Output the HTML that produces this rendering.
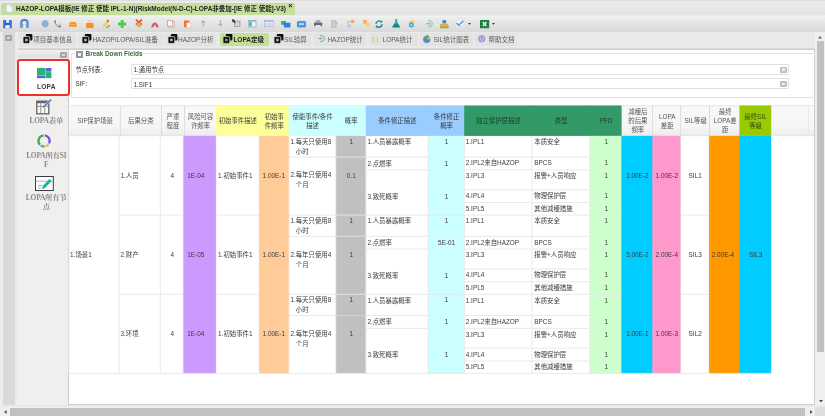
<!DOCTYPE html>
<html lang="zh"><head><meta charset="utf-8"><title>HAZOP-LOPA</title><style>
html,body{margin:0;padding:0}
body{width:825px;height:416px;overflow:hidden;position:relative;background:#e4e4e4;font-family:"Liberation Sans","Noto Sans CJK SC",sans-serif;font-size:6.6px;color:#333;line-height:1.2}
.a{position:absolute;box-sizing:border-box}
.t{position:absolute;white-space:nowrap}
#root{position:absolute;left:0;top:0;width:825px;height:416px;will-change:transform;transform:translateZ(0);filter:blur(.45px)}
.c{position:absolute;box-sizing:border-box;display:flex;white-space:nowrap;font-size:6.4px;color:#3a3a3a}
.hc{position:absolute;box-sizing:border-box;display:flex;align-items:center;justify-content:center;text-align:center;color:#555;font-size:6.4px;line-height:8.7px;padding-top:1.7px}
svg{position:absolute;overflow:visible}
</style></head><body><div id="root">
<div class="a" style="left:0;top:0;width:825px;height:15.6px;background:linear-gradient(#dcdcdc 0,#ebebeb 1.6px,#e3e3e3 100%)"></div>
<div class="a" style="left:1.4px;top:2.6px;width:293.2px;height:12.4px;background:#c6de9b;border-radius:2px 2px 0 0"></div>
<div class="a" style="left:0;top:15.4px;width:825px;height:1.8px;background:linear-gradient(#e6eddb,#f4f5f1)"></div>
<svg style="left:5.5px;top:4px" width="7" height="8.5" viewBox="0 0 7 8.5"><path d="M0.3 0.3h4l2.4 2.4v5.5h-6.4z" fill="#f4f7fb" stroke="#b9c4d6" stroke-width=".6"/><path d="M4.3 .3v2.4h2.4" fill="#dfe6f2" stroke="#b9c4d6" stroke-width=".5"/></svg>
<div class="t" id="title" style="left:16px;top:5.1px;font-weight:bold;font-size:6.48px;color:#222">HAZOP-LOPA模板(IE 修正 使能 IPL-1-N)(RiskModel(N-D-C)-LOPA非叠加-[IE 修正 使能]-V3)</div>
<div class="t" style="left:288.2px;top:2.2px;font-weight:bold;font-size:7.4px;color:#222">×</div>
<div class="a" style="left:0;top:17.2px;width:825px;height:14.6px;background:linear-gradient(#eeeeee,#d8d8d8)"></div>
<div class="a" id="toolbar" style="left:0;top:0;width:0;height:0"><svg style="left:3.3px;top:19.6px" width="8.8" height="8.2" viewBox="0 0 8.8 8.2"><rect x="0" y="0" width="8.8" height="8.2" rx=".9" fill="#2c5fcf"/><rect x="0" y="0" width="1.4" height="8.2" fill="#4f86e6"/><rect x="7.4" y="0" width="1.4" height="8.2" fill="#4f86e6"/><rect x="3" y="0" width="3.2" height="2.8" fill="#dfe9fa"/><rect x="2.4" y="5.2" width="4.2" height="3" fill="#f4f7fd"/></svg>
<svg style="left:20px;top:19.200000000000003px" width="8.8" height="8.8" viewBox="0 0 8.8 8.8"><path d="M0 8.8V3.6A4.4 3.6 0 0 1 8.8 3.6V8.8z" fill="#5a9be0"/><path d="M1.2 4.2A3.2 3 0 0 1 7.6 4.2V2.8A3.2 2.6 0 0 0 1.2 2.8z" fill="#2f6dc4"/><circle cx="4.4" cy="4" r="1.9" fill="#fde7d6"/><rect x="2.4" y="5.8" width="4" height="3" fill="#f7a868"/><rect x="3.5" y="5.8" width="1.8" height="3" fill="#fff"/></svg>
<svg style="left:40.6px;top:19.6px" width="8.4" height="7.6" viewBox="0 0 8.4 7.6"><circle cx="4.2" cy="3.8" r="3.8" fill="#a9c4e3"/><circle cx="4.2" cy="3.8" r="2.4" fill="none" stroke="#6b98cf" stroke-width=".9"/><circle cx="4.2" cy="3.8" r=".9" fill="#6b98cf"/></svg>
<svg style="left:53.6px;top:19.8px" width="7.4" height="7.8" viewBox="0 0 7.4 7.8"><path d="M1 1.2c.2 3 1.6 4.8 4.6 5.6" fill="none" stroke="#7a7a7a" stroke-width="1"/><circle cx="1.1" cy="1.2" r=".9" fill="#7a7a7a"/><circle cx="5.9" cy="6.6" r="1.1" fill="#7a7a7a"/><path d="M4.6 4.2h2.4" stroke="#9a9a9a" stroke-width=".7"/></svg>
<svg style="left:69px;top:22.400000000000002px" width="7.8" height="4.8" viewBox="0 0 7.8 4.8"><path d="M0 1.8L1.6 0h4.6L7.8 1.8V4.8H0z" fill="#f7941d"/><rect x="0" y="2" width="7.8" height=".8" fill="#fdbb62"/></svg>
<svg style="left:86px;top:19.8px" width="7.6" height="8" viewBox="0 0 7.6 8"><path d="M2 3.4V2.4a1.8 1.8 0 0 1 3.6 0V3.4" fill="none" stroke="#fac27e" stroke-width="1"/><rect x="0" y="3" width="7.6" height="5" rx=".8" fill="#f7941d"/></svg>
<svg style="left:101.6px;top:18.6px" width="8.6" height="9.2" viewBox="0 0 8.6 9.2"><path d="M.6 8.4L1.4 5.6 5.2 1.4 7 3 3.2 7.4z" fill="#f3d04a"/><path d="M4.2 1.8L5.6.4 7.4 2 6.2 3.4z" fill="#e2604c"/><path d="M3.4 8.8L7 5.2 8.4 6.6 5.6 9.2z" fill="#79c96a"/></svg>
<svg style="left:118px;top:19.8px" width="8.2" height="8" viewBox="0 0 8.2 8"><path d="M2.7 0h2.8v2.6h2.7v2.8H5.5V8H2.7V5.4H0V2.6h2.7z" fill="#4fcb4b"/></svg>
<svg style="left:135.4px;top:19.200000000000003px" width="7.8" height="8.6" viewBox="0 0 7.8 8.6"><path d="M.8.6l6.2 5M7 .6L.8 5.6" stroke="#e6452f" stroke-width="1.5"/><circle cx="3.9" cy="5.8" r="2.3" fill="#f5a742"/><path d="M1.8 7A2.4 2.4 0 0 0 6 7z" fill="#9ccf5a"/></svg>
<svg style="left:150.8px;top:22.0px" width="7.8" height="5.8" viewBox="0 0 7.8 5.8"><path d="M.2 5.6C.6 2 2.4.4 3.9.4S7.2 2 7.6 5.6L5.4 5.2 3.9 2.6 2.4 5.2z" fill="#d55c6c"/></svg>
<svg style="left:167.4px;top:19.6px" width="7.6" height="7.6" viewBox="0 0 7.6 7.6"><rect x="1.8" y="1.6" width="5.4" height="5.6" fill="#fbf3ef" stroke="#d3a79b" stroke-width=".8"/><rect x=".4" y=".4" width="5.2" height="5.6" fill="#fff" stroke="#c99b8f" stroke-width=".8"/></svg>
<svg style="left:184.4px;top:20.0px" width="7.2" height="7.8" viewBox="0 0 7.2 7.8"><rect x="0" y=".4" width="5.4" height="6.8" rx=".6" fill="#ee7a30"/><rect x="2.8" y="2.8" width="4.2" height="4.8" fill="#fff" stroke="#f1b089" stroke-width=".6"/></svg>
<svg style="left:201.2px;top:20.0px" width="4.6" height="6.6" viewBox="0 0 4.6 6.6"><path d="M2.3 6.6V1M.4 2.8L2.3.7 4.2 2.8" fill="none" stroke="#9c9c9c" stroke-width=".9"/></svg>
<svg style="left:217.6px;top:20.0px" width="4.6" height="6.6" viewBox="0 0 4.6 6.6"><path d="M2.3 0V5.6M.4 3.8L2.3 5.9 4.2 3.8" fill="none" stroke="#9c9c9c" stroke-width=".9"/></svg>
<svg style="left:232.4px;top:19.0px" width="8.4" height="8" viewBox="0 0 8.4 8"><rect x="2.6" y="2.2" width="5.4" height="5.4" fill="#d4d4d4" stroke="#9a9a9a" stroke-width=".8"/><path d="M0 0l3.4 1.4-1.2.7 1.5 1.7-.8.7L1.5 2.8.8 3.8z" fill="#222"/></svg>
<svg style="left:248px;top:19.6px" width="8.4" height="7.4" viewBox="0 0 8.4 7.4"><rect x=".4" y=".4" width="7.6" height="6.6" fill="#f4f9fd" stroke="#86aeda" stroke-width=".8"/><rect x="1.2" y="2" width="2.8" height="4.4" fill="#68c271"/><rect x=".4" y=".4" width="7.6" height="1.3" fill="#86aeda"/></svg>
<svg style="left:264px;top:20.400000000000002px" width="9.8" height="6.6" viewBox="0 0 9.8 6.6"><rect x=".4" y=".4" width="9" height="5.8" fill="#e4ebf6" stroke="#a3b8d8" stroke-width=".8"/><rect x=".4" y=".4" width="9" height="1.6" fill="#aebfdc"/><rect x="2" y="3" width="5.8" height="2" fill="#cbd7ea"/></svg>
<svg style="left:280.6px;top:20.8px" width="9.4" height="6.4" viewBox="0 0 9.4 6.4"><rect x="0" y="0" width="5" height="3.8" rx=".6" fill="#35b08c"/><path d="M2.4 1.8h7v4.6H3z" fill="#2f7fe0"/></svg>
<svg style="left:297px;top:21.0px" width="9" height="6.4" viewBox="0 0 9 6.4"><rect x=".4" y=".4" width="8.2" height="5.6" rx=".8" fill="#4f9be6" stroke="#3a84d2" stroke-width=".8"/><rect x="2" y="2.2" width="5" height="1.8" fill="#b9d8f6"/></svg>
<svg style="left:314px;top:20.200000000000003px" width="8.2" height="7.6" viewBox="0 0 8.2 7.6"><rect x="1.8" y="0" width="4.6" height="2.8" fill="#a7adb8"/><rect x="0" y="2.6" width="8.2" height="3.6" rx=".6" fill="#626b79"/><rect x="1.6" y="5" width="5" height="2.6" fill="#dfe3ea"/></svg>
<svg style="left:330.6px;top:20.0px" width="7" height="8" viewBox="0 0 7 8"><rect x=".4" y=".4" width="4.6" height="7.2" fill="#c9cfd6" stroke="#aeb6bf" stroke-width=".6"/><path d="M4 3.2h2.8M5.4 1.8v2.8" stroke="#aab2bb" stroke-width=".8"/></svg>
<svg style="left:346.6px;top:20.0px" width="7.6" height="7.8" viewBox="0 0 7.6 7.8"><rect x="0" y=".6" width="3.2" height="3" fill="#f4cf72"/><rect x="4" y="0" width="3.2" height="3" fill="#efa184"/><rect x=".6" y="4.4" width="3" height="3" fill="#a3cbea"/><rect x="4.2" y="4" width="3.2" height="3.4" fill="#dedede"/></svg>
<svg style="left:363.4px;top:20.0px" width="6.6" height="6.8" viewBox="0 0 6.6 6.8"><rect x="0" y="0" width="4" height="3.8" fill="#f5b25c"/><rect x="2.4" y="2.6" width="4.2" height="4.2" fill="#f5d572"/></svg>
<svg style="left:375.4px;top:19.8px" width="8" height="8" viewBox="0 0 8 8"><path d="M1 4A3 3 0 0 1 6.4 2.2" fill="none" stroke="#1fa79a" stroke-width="1.6"/><path d="M7 4.2A3 3 0 0 1 1.6 6" fill="none" stroke="#1f8fb0" stroke-width="1.6"/><path d="M5.2.4l2.4.6-.8 2.4z" fill="#1fa79a"/><path d="M2.8 8L.4 7.2l1-2.2z" fill="#1f8fb0"/></svg>
<svg style="left:391.6px;top:19.400000000000002px" width="8.4" height="8.8" viewBox="0 0 8.4 8.8"><path d="M3.2 0h2v2.8l3 5.2a.6.6 0 0 1-.5.8H.7a.6.6 0 0 1-.5-.8L3.2 2.8z" fill="#2bada4"/><path d="M2.2 5.2h4l1.5 2.9H.8z" fill="#1b7f8f"/></svg>
<svg style="left:408px;top:19.8px" width="7.4" height="7.6" viewBox="0 0 7.4 7.6"><circle cx="4.6" cy="2.2" r="2" fill="#f2cd5c"/><circle cx="2.4" cy="2.8" r="1.4" fill="#8fd08a"/><circle cx="3.4" cy="5.2" r="2.4" fill="#3f9fd4"/><circle cx="3.4" cy="5.2" r=".9" fill="#e4f3fa"/></svg>
<svg style="left:425.6px;top:20.200000000000003px" width="7.4" height="7.4" viewBox="0 0 7.4 7.4"><path d="M2.4.7a3.1 3.1 0 1 1 0 6" fill="none" stroke="#6aaead" stroke-width=".9"/><path d="M0 3.7h3.8M2.6 2.4l1.3 1.3-1.3 1.3" fill="none" stroke="#6aaead" stroke-width=".8"/></svg>
<svg style="left:440px;top:19.8px" width="8.6" height="8.2" viewBox="0 0 8.6 8.2"><rect x="2.4" y="0" width="3.8" height="3.4" rx=".8" fill="#3f86d8"/><path d="M0 8.2V5.4a2 2 0 0 1 2-2h4.6a2 2 0 0 1 2 2v2.8z" fill="#f5a43a"/><rect x="0" y="6.6" width="8.6" height="1.6" fill="#5cc466"/></svg>
<svg style="left:456px;top:20.0px" width="8" height="8" viewBox="0 0 8 8"><rect x="1" y=".6" width="6" height="7" fill="#f3f6fb"/><path d="M.6 3l2.2 2.2L7.4.8" fill="none" stroke="#5a96e2" stroke-width="1.5"/><path d="M2 6.6h4.4" stroke="#b8d0ee" stroke-width="1"/></svg>
<svg style="left:468.4px;top:23.0px" width="3" height="2" viewBox="0 0 3 2"><path d="M0 0h3L1.5 1.8z" fill="#333"/></svg>
<svg style="left:479.8px;top:19.700000000000003px" width="9.2" height="8.2" viewBox="0 0 9.2 8.2"><rect x="0" y="0" width="9.2" height="8.2" rx=".5" fill="#1e7e45"/><path d="M2.8 2l3.6 4.2M6.4 2L2.8 6.2" stroke="#fff" stroke-width="1.3"/></svg>
<svg style="left:492.4px;top:23.0px" width="3" height="2" viewBox="0 0 3 2"><path d="M0 0h3L1.5 1.8z" fill="#333"/></svg></div>
<div class="a" style="left:0;top:31.8px;width:825px;height:16px;background:#e9e9e9"></div>
<div class="a" style="left:0;top:47.6px;width:825px;height:1.8px;background:linear-gradient(#e4e4e4,#cfcfcf)"></div>
<div class="a" style="left:19.2px;top:32.5px;width:56.8px;height:13.8px;background:#e3e3e3;border:0.6px solid #e3e3e3;border-radius:1.5px 1.5px 0 0"></div>
<svg style="left:22.6px;top:33.9px" width="9.4" height="9.4" viewBox="0 0 9.4 9.4"><rect x="2.8" y="0" width="6.6" height="6.6" rx="1.1" fill="#0c0c0c"/><rect x="0" y="2.6" width="6.8" height="6.8" rx="1.1" fill="#0c0c0c" stroke="#e3e3e3" stroke-width=".8"/><rect x="2.1" y="4.7" width="2.6" height="2.6" fill="#b5b5b5"/></svg>
<div class="t tabt" style="left:33.3px;top:35.6px;font-size:6.5px;color:#5c5c5c;font-weight:normal">项目基本信息</div>
<div class="a" style="left:78.5px;top:32.5px;width:84.3px;height:13.8px;background:#e3e3e3;border:0.6px solid #e3e3e3;border-radius:1.5px 1.5px 0 0"></div>
<svg style="left:81.9px;top:33.9px" width="9.4" height="9.4" viewBox="0 0 9.4 9.4"><rect x="2.8" y="0" width="6.6" height="6.6" rx="1.1" fill="#0c0c0c"/><rect x="0" y="2.6" width="6.8" height="6.8" rx="1.1" fill="#0c0c0c" stroke="#e3e3e3" stroke-width=".8"/><rect x="2.1" y="4.7" width="2.6" height="2.6" fill="#b5b5b5"/></svg>
<div class="t tabt" style="left:92.4px;top:35.6px;font-size:6.5px;color:#5c5c5c;font-weight:normal">HAZOP/LOPA/SIL准备</div>
<div class="a" style="left:164.3px;top:32.5px;width:52.1px;height:13.8px;background:#e3e3e3;border:0.6px solid #e3e3e3;border-radius:1.5px 1.5px 0 0"></div>
<svg style="left:167.7px;top:33.9px" width="9.4" height="9.4" viewBox="0 0 9.4 9.4"><rect x="2.8" y="0" width="6.6" height="6.6" rx="1.1" fill="#0c0c0c"/><rect x="0" y="2.6" width="6.8" height="6.8" rx="1.1" fill="#0c0c0c" stroke="#e3e3e3" stroke-width=".8"/><rect x="2.1" y="4.7" width="2.6" height="2.6" fill="#b5b5b5"/></svg>
<div class="t tabt" style="left:178px;top:35.6px;font-size:6.5px;color:#5c5c5c;font-weight:normal">HAZOP分析</div>
<div class="a" style="left:219.5px;top:32.5px;width:49.5px;height:13.8px;background:#c6de9b;border:0.6px solid #c6de9b;border-radius:1.5px 1.5px 0 0"></div>
<svg style="left:222.9px;top:33.9px" width="9.4" height="9.4" viewBox="0 0 9.4 9.4"><rect x="2.8" y="0" width="6.6" height="6.6" rx="1.1" fill="#0c0c0c"/><rect x="0" y="2.6" width="6.8" height="6.8" rx="1.1" fill="#0c0c0c" stroke="#c6de9b" stroke-width=".8"/><rect x="2.1" y="4.7" width="2.6" height="2.6" fill="#7e9a52"/></svg>
<div class="t tabt" style="left:233.4px;top:35.6px;font-size:6.5px;color:#1e1e1e;font-weight:bold">LOPA定级</div>
<div class="a" style="left:270.8px;top:32.5px;width:40.0px;height:13.8px;background:#e3e3e3;border:0.6px solid #e3e3e3;border-radius:1.5px 1.5px 0 0"></div>
<svg style="left:274.2px;top:33.9px" width="9.4" height="9.4" viewBox="0 0 9.4 9.4"><rect x="2.8" y="0" width="6.6" height="6.6" rx="1.1" fill="#0c0c0c"/><rect x="0" y="2.6" width="6.8" height="6.8" rx="1.1" fill="#0c0c0c" stroke="#e3e3e3" stroke-width=".8"/><rect x="2.1" y="4.7" width="2.6" height="2.6" fill="#b5b5b5"/></svg>
<div class="t tabt" style="left:284px;top:35.6px;font-size:6.5px;color:#5c5c5c;font-weight:normal">SIL验算</div>
<div class="a" style="left:314px;top:32.5px;width:52.0px;height:13.8px;background:#e3e3e3;border:0.6px solid #e3e3e3;border-radius:1.5px 1.5px 0 0"></div>
<svg style="left:318.0px;top:35.4px" width="7" height="7" viewBox="0 0 7 7"><path d="M2.2 .7a3 3 0 1 1 0 5.6" fill="none" stroke="#6fa9a6" stroke-width="1"/><path d="M0 3.5h3.6M2.4 2.2l1.4 1.3-1.4 1.3" fill="none" stroke="#6fa9a6" stroke-width=".9"/></svg>
<div class="t tabt" style="left:327.4px;top:35.6px;font-size:6.5px;color:#5c5c5c;font-weight:normal">HAZOP统计</div>
<div class="a" style="left:369px;top:32.5px;width:49.0px;height:13.8px;background:#e3e3e3;border:0.6px solid #e3e3e3;border-radius:1.5px 1.5px 0 0"></div>
<svg style="left:372.0px;top:35.6px" width="8" height="7" viewBox="0 0 8 7"><rect x="0.3" y="1" width="1.3" height="5.6" fill="#f0b98a"/><rect x="2.5" y="2.6" width="1.3" height="4" fill="#f3d9a4"/><rect x="4.6" y=".4" width="1.3" height="6.2" fill="#bfe0a8"/><rect x="6.4" y="3" width="1.1" height="3.6" fill="#cfe8f0"/></svg>
<div class="t tabt" style="left:382.6px;top:35.6px;font-size:6.5px;color:#5c5c5c;font-weight:normal">LOPA统计</div>
<div class="a" style="left:420px;top:32.5px;width:52.6px;height:13.8px;background:#e3e3e3;border:0.6px solid #e3e3e3;border-radius:1.5px 1.5px 0 0"></div>
<svg style="left:422.8px;top:34.8px" width="7.6" height="8.4" viewBox="0 0 7.6 8.4"><circle cx="3.8" cy="4.6" r="3.5" fill="#3f8fd6"/><path d="M3.8 4.6L3.8 1.1A3.5 3.5 0 0 1 7.2 4z" fill="#e9b530"/><path d="M3.8 4.6L.4 4.0A3.5 3.5 0 0 1 3.8 1.1z" fill="#2fae8f"/><path d="M3.8 4.6L1.4 7.2A3.5 3.5 0 0 1 .4 4z" fill="#d2559b"/><circle cx="4.2" cy="1.6" r="1.5" fill="#35b08c"/></svg>
<div class="t tabt" style="left:433.4px;top:35.6px;font-size:6.5px;color:#5c5c5c;font-weight:normal">SIL统计图表</div>
<div class="a" style="left:474.6px;top:32.5px;width:42.8px;height:13.8px;background:#e3e3e3;border:0.6px solid #e3e3e3;border-radius:1.5px 1.5px 0 0"></div>
<svg style="left:478.0px;top:35px" width="7.6" height="7.6" viewBox="0 0 7.6 7.6"><circle cx="3.8" cy="3.8" r="3.7" fill="#a9a3e3"/><circle cx="3.8" cy="3.8" r="2.3" fill="#8d86dc"/><path d="M2.6 2.2v2a1.2 1.2 0 0 0 2.4 0v-2" stroke="#e9e7fb" stroke-width=".8" fill="none"/></svg>
<div class="t tabt" style="left:488.6px;top:35.6px;font-size:6.5px;color:#5c5c5c;font-weight:normal">帮助文档</div>
<div class="a" style="left:0;top:31.8px;width:18px;height:376px;background:#ececec"></div>
<div class="a" style="left:2.6px;top:31.8px;width:12.4px;height:376px;background:#d9d9d9"></div>
<div class="a" style="left:5.3px;top:34.7px;width:6.8px;height:6px;background:#d8d8d8;border:2px solid #a6a6a6;border-radius:.8px"></div>
<div class="a" style="left:18px;top:49.3px;width:51px;height:355.5px;background:#f0efee;border-top:.7px solid #d0d0d0"></div>
<div class="a" style="left:18px;top:50px;width:50.5px;height:7.8px;background:linear-gradient(#f1f1f1,#dfdfdf)"></div>
<div class="a" style="left:60.2px;top:51.5px;width:6.4px;height:6px;background:#d8d8d8;border:2px solid #a6a6a6;border-radius:.8px"></div>
<div class="a" style="left:17.2px;top:58.6px;width:52.8px;height:37px;background:#fff;border:2px solid #ee2f2a;border-radius:3.2px;z-index:3"></div>
<svg style="left:37.1px;top:67.8px;z-index:4" width="14.4" height="10.2" viewBox="0 0 14.4 10.2"><rect x="0" y="0" width="8.6" height="7" fill="#22b573"/><rect x="9" y="0" width="5.4" height="3.7" fill="#5566e0"/><rect x="9" y="4.1" width="5.4" height="6.1" fill="#22b573"/><rect x="0" y="7.4" width="8.6" height="2.8" fill="#5566e0"/></svg>
<div class="t" style="left:20.4px;width:51.8px;text-align:center;top:82.7px;font-weight:bold;font-size:6.6px;color:#3a3a3a;letter-spacing:.2px;z-index:4">LOPA</div>
<svg style="left:36px;top:98.4px" width="17" height="17" viewBox="0 0 17 17"><rect x=".8" y="3.2" width="12" height="12.6" fill="#fbfbfb" stroke="#606060" stroke-width="1.3"/><path d="M.8 4.2h12" stroke="#606060" stroke-width="2"/><path d="M.8 8.4h12M4.8 3.2v12.6M8.8 3.2v12.6" stroke="#7a7a7a" stroke-width=".8" fill="none"/><path d="M6.6 9.8l1.4-2.6L14.4.8l1.6 1.4-6.6 6.6z" fill="#4a82c4" stroke="#fff" stroke-width=".5"/><path d="M6.6 9.8l1-2 1 1z" fill="#444"/></svg>
<div class="t" style="left:20.4px;width:51.8px;text-align:center;top:116.7px;font-family:'Liberation Serif','Noto Serif CJK SC',serif;font-size:7.4px;letter-spacing:-.18px;font-weight:bold;color:#8a8a8a">LOPA表单</div>
<svg style="left:37.4px;top:134.3px" width="14.2" height="13.8" viewBox="0 0 14.2 13.8"><g fill="none" stroke-width="2.3"><path d="M7.88 1.35A5.6 5.6 0 0 1 12.04 9.53" stroke="#7a55d0"/><path d="M11.51 10.35A5.6 5.6 0 0 1 8.45 12.33" stroke="#f6b73c"/><path d="M7.49 12.49A5.6 5.6 0 0 1 3.81 11.43" stroke="#2fb5a0"/><path d="M3.07 10.79A5.6 5.6 0 0 1 6.71 1.31" stroke="#3fae4c"/></g></svg>
<div class="t" style="left:20.4px;width:51.8px;text-align:center;top:152.1px;font-family:'Liberation Serif','Noto Serif CJK SC',serif;font-size:7.4px;letter-spacing:-.18px;font-weight:bold;color:#8a8a8a;line-height:8.8px;white-space:normal">LOPA所有SI<br>F</div>
<svg style="left:34.8px;top:176.2px" width="18.8" height="15" viewBox="0 0 18.8 15"><rect x=".5" y=".5" width="17.8" height="14" fill="#fcfcfc" stroke="#3c3c3c" stroke-width="1"/><path d="M.5 5.2h17.8" stroke="#9a9a9a" stroke-width=".7"/><path d="M3 9.4h4.4M3 12h3" stroke="#8a8a8a" stroke-width=".7"/><path d="M7 13l.8-3 6.6-7 2.2 2-6.6 7z" fill="#18b3a4"/></svg>
<div class="t" style="left:20.4px;width:51.8px;text-align:center;top:193.8px;font-family:'Liberation Serif','Noto Serif CJK SC',serif;font-size:7.4px;letter-spacing:-.18px;font-weight:bold;color:#8a8a8a;line-height:8.8px;white-space:normal">LOPA所有节<br>点</div>
<div class="a" style="left:68.3px;top:49.2px;width:746.3px;height:355.4px;background:#fff;border:0.8px solid #cdcdcd"></div>
<div class="a" style="left:70.5px;top:53.3px;width:744px;height:44.3px;border:0.7px solid #e4e4e4;border-right:0"></div>
<div class="a" style="left:75px;top:50.5px;width:62px;height:7px;background:#fff"></div>
<div class="a" style="left:76.2px;top:51.1px;width:6.6px;height:6.6px;background:#f4f4f4;border:2.3px solid #959595"></div>
<div class="t" id="bdf" style="left:85.6px;top:50.4px;font-weight:bold;font-size:6.4px;color:#3c6a3c;letter-spacing:-.02px">Break Down Fields</div>
<div class="t" style="left:75.4px;top:66.2px;font-size:6.3px;color:#333">节点列表:</div>
<div class="t" style="left:75.4px;top:80.2px;font-size:6.3px;color:#333">SIF:</div>
<div class="a" style="left:130.6px;top:64.2px;width:658px;height:11px;background:#fff;border:0.8px solid #e0e0e0;border-radius:1px"></div>
<div class="t" style="left:133.6px;top:66.3px;font-size:6.3px;color:#333">1.通用节点</div>
<div class="a" style="left:779.6px;top:66.5px;width:7px;height:6.4px;background:#c6c6c6;border:0.8px solid #b8b8b8;border-radius:1px"></div>
<div class="a" style="left:781.6px;top:68.4px;width:3px;height:2.4px;background:#f2f2f2;border-radius:1px"></div>
<div class="a" style="left:130.6px;top:78.4px;width:658px;height:11px;background:#fff;border:0.8px solid #e0e0e0;border-radius:1px"></div>
<div class="t" style="left:133.6px;top:80.5px;font-size:6.3px;color:#333">1.SIF1</div>
<div class="a" style="left:779.6px;top:80.7px;width:7px;height:6.4px;background:#c6c6c6;border:0.8px solid #b8b8b8;border-radius:1px"></div>
<div class="a" style="left:781.6px;top:82.60000000000001px;width:3px;height:2.4px;background:#f2f2f2;border-radius:1px"></div>
<svg style="left:0;top:0" width="825" height="416" viewBox="0 0 825 416"><defs><linearGradient id="hg" x1="0" y1="0" x2="0" y2="1"><stop offset="0" stop-color="#f9f9f9"/><stop offset=".68" stop-color="#f6f6f6"/><stop offset="1" stop-color="#ececec"/></linearGradient></defs><rect x="69.2" y="105.5" width="744.8" height="30.4" fill="url(#hg)"/><path d="M69.2 105.8L814.0 105.8" stroke="#dfdfdf" stroke-width="0.8"/><path d="M69.2 135.7L814.0 135.7" stroke="#dddddd" stroke-width="0.7"/><rect x="215.8" y="105.5" width="44.2" height="30.4" fill="#ffff99"/><rect x="259.3" y="105.5" width="30.0" height="30.4" fill="#ffff99"/><rect x="288.6" y="105.5" width="48.1" height="30.4" fill="#ccffff"/><rect x="336.0" y="105.5" width="30.5" height="30.4" fill="#ccffff"/><rect x="365.8" y="105.5" width="63.2" height="30.4" fill="#99ccff"/><rect x="428.3" y="105.5" width="36.6" height="30.4" fill="#99ccff"/><rect x="464.2" y="105.5" width="68.4" height="30.4" fill="#339966"/><rect x="531.9" y="105.5" width="58.8" height="30.4" fill="#339966"/><rect x="590.0" y="105.5" width="31.6" height="30.4" fill="#339966"/><rect x="739.4" y="105.5" width="31.7" height="30.4" fill="#99cc00"/><path d="M120.4 105.5L120.4 135.9" stroke="#d9d9d9" stroke-width="0.9"/><path d="M161.5 105.5L161.5 135.9" stroke="#d9d9d9" stroke-width="0.9"/><path d="M184.5 105.5L184.5 135.9" stroke="#d9d9d9" stroke-width="0.9"/><path d="M652.6 105.5L652.6 135.9" stroke="#d9d9d9" stroke-width="0.9"/><path d="M680.7 105.5L680.7 135.9" stroke="#d9d9d9" stroke-width="0.9"/><path d="M709.5 105.5L709.5 135.9" stroke="#d9d9d9" stroke-width="0.9"/><path d="M771.5 105.5L771.5 135.9" stroke="#e0e0e0" stroke-width="0.8"/><path d="M808.4 105.5L808.4 135.9" stroke="#e4e4e4" stroke-width="0.8"/><rect x="183.5" y="135.9" width="32.3" height="237.6" fill="#cc99ff"/><rect x="259.3" y="135.9" width="29.3" height="237.6" fill="#ffcc99"/><rect x="336.0" y="135.9" width="29.8" height="237.6" fill="#c0c0c0"/><rect x="428.3" y="135.9" width="35.9" height="237.6" fill="#ccffff"/><rect x="590.0" y="135.9" width="32.3" height="237.6" fill="#ccffcc"/><rect x="621.6" y="135.9" width="31.4" height="237.6" fill="#00ccff"/><rect x="652.3" y="135.9" width="28.1" height="237.6" fill="#ff99cc"/><rect x="709.2" y="135.9" width="30.9" height="237.6" fill="#ff9900"/><rect x="739.4" y="135.9" width="31.7" height="237.6" fill="#00ccff"/><path d="M68.9 135.9L68.9 373.5" stroke="#e6e6e6" stroke-width="0.9"/><path d="M119.2 135.9L119.2 373.5" stroke="#e6e6e6" stroke-width="0.9"/><path d="M160.3 135.9L160.3 373.5" stroke="#e6e6e6" stroke-width="0.9"/><path d="M183.2 135.9L183.2 373.5" stroke="#e6e6e6" stroke-width="0.9"/><path d="M216.0 135.9L216.0 373.5" stroke="#e6e6e6" stroke-width="0.9"/><path d="M259.1 135.9L259.1 373.5" stroke="#e6e6e6" stroke-width="0.9"/><path d="M288.8 135.9L288.8 373.5" stroke="#e6e6e6" stroke-width="0.9"/><path d="M335.8 135.9L335.8 373.5" stroke="#e6e6e6" stroke-width="0.9"/><path d="M366.0 135.9L366.0 373.5" stroke="#e6e6e6" stroke-width="0.9"/><path d="M428.1 135.9L428.1 373.5" stroke="#e6e6e6" stroke-width="0.9"/><path d="M464.4 135.9L464.4 373.5" stroke="#e6e6e6" stroke-width="0.9"/><path d="M531.9 135.9L531.9 373.5" stroke="#e6e6e6" stroke-width="0.9"/><path d="M589.8 135.9L589.8 373.5" stroke="#e6e6e6" stroke-width="0.9"/><path d="M680.6 135.9L680.6 373.5" stroke="#e6e6e6" stroke-width="0.9"/><path d="M709.0 135.9L709.0 373.5" stroke="#e6e6e6" stroke-width="0.9"/><path d="M69.2 373.3L771.1 373.3" stroke="#e6e6e6" stroke-width="0.9"/><path d="M288.6 157.1L428.3 157.1" stroke="#e6e6e6" stroke-width="0.9"/><path d="M365.8 169.9L428.3 169.9" stroke="#e6e6e6" stroke-width="0.9"/><path d="M464.2 157.1L590.0 157.1" stroke="#e6e6e6" stroke-width="0.9"/><path d="M464.2 169.9L590.0 169.9" stroke="#e6e6e6" stroke-width="0.9"/><path d="M464.2 189.8L590.0 189.8" stroke="#e6e6e6" stroke-width="0.9"/><path d="M464.2 202.6L590.0 202.6" stroke="#e6e6e6" stroke-width="0.9"/><path d="M336.0 157.1L365.8 157.1" stroke="#d2d2d2" stroke-width="0.8"/><path d="M428.3 157.1L464.2 157.1" stroke="#ddf7f7" stroke-width="0.8"/><path d="M428.3 169.9L464.2 169.9" stroke="#ddf7f7" stroke-width="0.8"/><path d="M590.0 157.1L621.6 157.1" stroke="#ddf7dd" stroke-width="0.8"/><path d="M590.0 169.9L621.6 169.9" stroke="#ddf7dd" stroke-width="0.8"/><path d="M590.0 189.8L621.6 189.8" stroke="#ddf7dd" stroke-width="0.8"/><path d="M590.0 202.6L621.6 202.6" stroke="#ddf7dd" stroke-width="0.8"/><path d="M119.4 215.1L709.2 215.1" stroke="#e6e6e6" stroke-width="0.9"/><path d="M288.6 236.3L428.3 236.3" stroke="#e6e6e6" stroke-width="0.9"/><path d="M365.8 249.1L428.3 249.1" stroke="#e6e6e6" stroke-width="0.9"/><path d="M464.2 236.3L590.0 236.3" stroke="#e6e6e6" stroke-width="0.9"/><path d="M464.2 249.1L590.0 249.1" stroke="#e6e6e6" stroke-width="0.9"/><path d="M464.2 269.0L590.0 269.0" stroke="#e6e6e6" stroke-width="0.9"/><path d="M464.2 281.8L590.0 281.8" stroke="#e6e6e6" stroke-width="0.9"/><path d="M336.0 236.3L365.8 236.3" stroke="#d2d2d2" stroke-width="0.8"/><path d="M428.3 236.3L464.2 236.3" stroke="#ddf7f7" stroke-width="0.8"/><path d="M428.3 249.1L464.2 249.1" stroke="#ddf7f7" stroke-width="0.8"/><path d="M590.0 236.3L621.6 236.3" stroke="#ddf7dd" stroke-width="0.8"/><path d="M590.0 249.1L621.6 249.1" stroke="#ddf7dd" stroke-width="0.8"/><path d="M590.0 269.0L621.6 269.0" stroke="#ddf7dd" stroke-width="0.8"/><path d="M590.0 281.8L621.6 281.8" stroke="#ddf7dd" stroke-width="0.8"/><path d="M119.4 294.3L709.2 294.3" stroke="#e6e6e6" stroke-width="0.9"/><path d="M288.6 315.5L428.3 315.5" stroke="#e6e6e6" stroke-width="0.9"/><path d="M365.8 328.3L428.3 328.3" stroke="#e6e6e6" stroke-width="0.9"/><path d="M464.2 315.5L590.0 315.5" stroke="#e6e6e6" stroke-width="0.9"/><path d="M464.2 328.3L590.0 328.3" stroke="#e6e6e6" stroke-width="0.9"/><path d="M464.2 348.2L590.0 348.2" stroke="#e6e6e6" stroke-width="0.9"/><path d="M464.2 361.0L590.0 361.0" stroke="#e6e6e6" stroke-width="0.9"/><path d="M336.0 315.5L365.8 315.5" stroke="#d2d2d2" stroke-width="0.8"/><path d="M428.3 315.5L464.2 315.5" stroke="#ddf7f7" stroke-width="0.8"/><path d="M428.3 328.3L464.2 328.3" stroke="#ddf7f7" stroke-width="0.8"/><path d="M590.0 315.5L621.6 315.5" stroke="#ddf7dd" stroke-width="0.8"/><path d="M590.0 328.3L621.6 328.3" stroke="#ddf7dd" stroke-width="0.8"/><path d="M590.0 348.2L621.6 348.2" stroke="#ddf7dd" stroke-width="0.8"/><path d="M590.0 361.0L621.6 361.0" stroke="#ddf7dd" stroke-width="0.8"/><rect x="183.5" y="136.9" width="32.3" height="235.6" fill="#cc99ff"/><rect x="259.3" y="136.9" width="29.3" height="235.6" fill="#ffcc99"/><rect x="621.6" y="136.9" width="31.4" height="235.6" fill="#00ccff"/><rect x="652.3" y="136.9" width="28.1" height="235.6" fill="#ff99cc"/><rect x="709.2" y="136.9" width="30.9" height="235.6" fill="#ff9900"/><rect x="739.4" y="136.9" width="31.7" height="235.6" fill="#00ccff"/></svg>
<div class="hc" style="left:70.1px;top:105.5px;width:50.2px;height:30.4px;">SIF保护场景</div>
<div class="hc" style="left:120.3px;top:105.5px;width:41.1px;height:30.4px;">后果分类</div>
<div class="hc" style="left:161.4px;top:105.5px;width:23.0px;height:30.4px;">严重<br>程度</div>
<div class="hc" style="left:184.4px;top:105.5px;width:32.3px;height:30.4px;">风险可容<br>许频率</div>
<div class="hc" style="left:216.1px;top:105.5px;width:43.5px;height:30.4px;color:#3a3a3a;">初始事件描述</div>
<div class="hc" style="left:259.6px;top:105.5px;width:29.3px;height:30.4px;color:#3a3a3a;">初始事<br>件频率</div>
<div class="hc" style="left:288.9px;top:105.5px;width:47.4px;height:30.4px;color:#3a3a3a;">使能事件/条件<br>描述</div>
<div class="hc" style="left:336.3px;top:105.5px;width:29.8px;height:30.4px;color:#3a3a3a;">概率</div>
<div class="hc" style="left:366.1px;top:105.5px;width:62.5px;height:30.4px;color:#3a3a3a;">条件修正描述</div>
<div class="hc" style="left:428.6px;top:105.5px;width:35.9px;height:30.4px;color:#3a3a3a;">条件修正<br>概率</div>
<div class="hc" style="left:464.5px;top:105.5px;width:67.7px;height:30.4px;color:#3a3a3a;color:#173f2a;">独立保护层描述</div>
<div class="hc" style="left:532.2px;top:105.5px;width:58.1px;height:30.4px;color:#3a3a3a;color:#173f2a;">类型</div>
<div class="hc" style="left:590.3px;top:105.5px;width:31.6px;height:30.4px;color:#3a3a3a;color:#173f2a;">PFD</div>
<div class="hc" style="left:622.5px;top:105.5px;width:30.7px;height:30.4px;">减缓后<br>的后果<br>频率</div>
<div class="hc" style="left:653.2px;top:105.5px;width:28.1px;height:30.4px;">LOPA<br>差距</div>
<div class="hc" style="left:681.3px;top:105.5px;width:28.8px;height:30.4px;">SIL等级</div>
<div class="hc" style="left:710.1px;top:105.5px;width:30.2px;height:30.4px;">最终<br>LOPA差<br>距</div>
<div class="hc" style="left:739.7px;top:105.5px;width:31.7px;height:30.4px;color:#3a3a3a;color:#34440c;">最终SIL<br>等级</div>
<div class="c" style="left:69.2px;top:250.5px;width:50.2px;line-height:7.4px;padding-left:0.9px;">1.场景1</div>
<div class="c" style="left:119.4px;top:171.6px;width:41.1px;line-height:7.4px;padding-left:1.1px;">1.人员</div>
<div class="c" style="left:160.5px;top:171.6px;width:23.0px;line-height:7.4px;justify-content:center;text-align:center;padding-left:.8px;">4</div>
<div class="c" style="left:183.5px;top:171.6px;width:32.3px;line-height:7.4px;padding-left:3.7px;">1E-04</div>
<div class="c" style="left:215.8px;top:171.6px;width:43.5px;line-height:7.4px;padding-left:2.3px;">1.初始事件1</div>
<div class="c" style="left:259.3px;top:171.6px;width:29.3px;line-height:7.4px;padding-left:3.3px;">1.00E-1</div>
<div class="c" style="left:288.6px;top:137.0px;width:47.4px;line-height:10.1px;padding-left:1.8px;white-space:normal;"><span style="display:block;padding-left:5.4px;text-indent:-5.4px">1.每天只使用8小时</span></div>
<div class="c" style="left:288.6px;top:170.3px;width:47.4px;line-height:10.1px;padding-left:1.8px;white-space:normal;"><span style="display:block;padding-left:5.4px;text-indent:-5.4px">2.每年只使用4个月</span></div>
<div class="c" style="left:336.0px;top:138.0px;width:29.8px;line-height:7.4px;justify-content:center;text-align:center;padding-left:.8px;">1</div>
<div class="c" style="left:336.0px;top:171.6px;width:29.8px;line-height:7.4px;justify-content:center;text-align:center;padding-left:.8px;">0.1</div>
<div class="c" style="left:365.8px;top:138.2px;width:62.5px;line-height:7.4px;padding-left:1.6px;">1.人员暴露概率</div>
<div class="c" style="left:365.8px;top:159.5px;width:62.5px;line-height:7.4px;padding-left:1.6px;">2.点燃率</div>
<div class="c" style="left:365.8px;top:193.0px;width:62.5px;line-height:7.4px;padding-left:1.6px;">3.致死概率</div>
<div class="c" style="left:428.3px;top:138.0px;width:35.9px;line-height:7.4px;justify-content:center;text-align:center;padding-left:.8px;">1</div>
<div class="c" style="left:428.3px;top:159.5px;width:35.9px;line-height:7.4px;justify-content:center;text-align:center;padding-left:.8px;">1</div>
<div class="c" style="left:428.3px;top:193.0px;width:35.9px;line-height:7.4px;justify-content:center;text-align:center;padding-left:.8px;">1</div>
<div class="c" style="left:464.2px;top:138.2px;width:67.7px;line-height:7.4px;padding-left:1.6px;">1.IPL1</div>
<div class="c" style="left:531.9px;top:138.2px;width:58.1px;line-height:7.4px;padding-left:2.4px;">本质安全</div>
<div class="c" style="left:590.0px;top:138.2px;width:31.6px;line-height:7.4px;justify-content:center;text-align:center;padding-left:.8px;">1</div>
<div class="c" style="left:464.2px;top:159.4px;width:67.7px;line-height:7.4px;padding-left:1.6px;">2.IPL2来自HAZOP</div>
<div class="c" style="left:531.9px;top:159.4px;width:58.1px;line-height:7.4px;padding-left:2.4px;">BPCS</div>
<div class="c" style="left:590.0px;top:159.4px;width:31.6px;line-height:7.4px;justify-content:center;text-align:center;padding-left:.8px;">1</div>
<div class="c" style="left:464.2px;top:172.2px;width:67.7px;line-height:7.4px;padding-left:1.6px;">3.IPL3</div>
<div class="c" style="left:531.9px;top:172.2px;width:58.1px;line-height:7.4px;padding-left:2.4px;">报警+人员响应</div>
<div class="c" style="left:590.0px;top:172.2px;width:31.6px;line-height:7.4px;justify-content:center;text-align:center;padding-left:.8px;">1</div>
<div class="c" style="left:464.2px;top:192.1px;width:67.7px;line-height:7.4px;padding-left:1.6px;">4.IPL4</div>
<div class="c" style="left:531.9px;top:192.1px;width:58.1px;line-height:7.4px;padding-left:2.4px;">物理保护层</div>
<div class="c" style="left:590.0px;top:192.1px;width:31.6px;line-height:7.4px;justify-content:center;text-align:center;padding-left:.8px;">1</div>
<div class="c" style="left:464.2px;top:204.9px;width:67.7px;line-height:7.4px;padding-left:1.6px;">5.IPL5</div>
<div class="c" style="left:531.9px;top:204.9px;width:58.1px;line-height:7.4px;padding-left:2.4px;">其他减缓措施</div>
<div class="c" style="left:590.0px;top:204.9px;width:31.6px;line-height:7.4px;justify-content:center;text-align:center;padding-left:.8px;">1</div>
<div class="c" style="left:621.6px;top:171.6px;width:30.7px;line-height:7.4px;justify-content:center;text-align:center;padding-left:.8px;">1.00E-2</div>
<div class="c" style="left:652.3px;top:171.6px;width:28.1px;line-height:7.4px;justify-content:center;text-align:center;padding-left:.8px;">1.00E-2</div>
<div class="c" style="left:680.4px;top:171.6px;width:28.8px;line-height:7.4px;justify-content:center;text-align:center;padding-left:.8px;">SIL1</div>
<div class="c" style="left:119.4px;top:250.8px;width:41.1px;line-height:7.4px;padding-left:1.1px;">2.财产</div>
<div class="c" style="left:160.5px;top:250.8px;width:23.0px;line-height:7.4px;justify-content:center;text-align:center;padding-left:.8px;">4</div>
<div class="c" style="left:183.5px;top:250.8px;width:32.3px;line-height:7.4px;padding-left:3.7px;">1E-05</div>
<div class="c" style="left:215.8px;top:250.8px;width:43.5px;line-height:7.4px;padding-left:2.3px;">1.初始事件1</div>
<div class="c" style="left:259.3px;top:250.8px;width:29.3px;line-height:7.4px;padding-left:3.3px;">1.00E-1</div>
<div class="c" style="left:288.6px;top:216.2px;width:47.4px;line-height:10.1px;padding-left:1.8px;white-space:normal;"><span style="display:block;padding-left:5.4px;text-indent:-5.4px">1.每天只使用8小时</span></div>
<div class="c" style="left:288.6px;top:249.5px;width:47.4px;line-height:10.1px;padding-left:1.8px;white-space:normal;"><span style="display:block;padding-left:5.4px;text-indent:-5.4px">2.每年只使用4个月</span></div>
<div class="c" style="left:336.0px;top:217.2px;width:29.8px;line-height:7.4px;justify-content:center;text-align:center;padding-left:.8px;">1</div>
<div class="c" style="left:336.0px;top:250.8px;width:29.8px;line-height:7.4px;justify-content:center;text-align:center;padding-left:.8px;">1</div>
<div class="c" style="left:365.8px;top:217.4px;width:62.5px;line-height:7.4px;padding-left:1.6px;">1.人员暴露概率</div>
<div class="c" style="left:365.8px;top:238.7px;width:62.5px;line-height:7.4px;padding-left:1.6px;">2.点燃率</div>
<div class="c" style="left:365.8px;top:272.2px;width:62.5px;line-height:7.4px;padding-left:1.6px;">3.致死概率</div>
<div class="c" style="left:428.3px;top:217.2px;width:35.9px;line-height:7.4px;justify-content:center;text-align:center;padding-left:.8px;">1</div>
<div class="c" style="left:428.3px;top:238.7px;width:35.9px;line-height:7.4px;justify-content:center;text-align:center;padding-left:.8px;">5E-01</div>
<div class="c" style="left:428.3px;top:272.2px;width:35.9px;line-height:7.4px;justify-content:center;text-align:center;padding-left:.8px;">1</div>
<div class="c" style="left:464.2px;top:217.4px;width:67.7px;line-height:7.4px;padding-left:1.6px;">1.IPL1</div>
<div class="c" style="left:531.9px;top:217.4px;width:58.1px;line-height:7.4px;padding-left:2.4px;">本质安全</div>
<div class="c" style="left:590.0px;top:217.4px;width:31.6px;line-height:7.4px;justify-content:center;text-align:center;padding-left:.8px;">1</div>
<div class="c" style="left:464.2px;top:238.6px;width:67.7px;line-height:7.4px;padding-left:1.6px;">2.IPL2来自HAZOP</div>
<div class="c" style="left:531.9px;top:238.6px;width:58.1px;line-height:7.4px;padding-left:2.4px;">BPCS</div>
<div class="c" style="left:590.0px;top:238.6px;width:31.6px;line-height:7.4px;justify-content:center;text-align:center;padding-left:.8px;">1</div>
<div class="c" style="left:464.2px;top:251.4px;width:67.7px;line-height:7.4px;padding-left:1.6px;">3.IPL3</div>
<div class="c" style="left:531.9px;top:251.4px;width:58.1px;line-height:7.4px;padding-left:2.4px;">报警+人员响应</div>
<div class="c" style="left:590.0px;top:251.4px;width:31.6px;line-height:7.4px;justify-content:center;text-align:center;padding-left:.8px;">1</div>
<div class="c" style="left:464.2px;top:271.3px;width:67.7px;line-height:7.4px;padding-left:1.6px;">4.IPL4</div>
<div class="c" style="left:531.9px;top:271.3px;width:58.1px;line-height:7.4px;padding-left:2.4px;">物理保护层</div>
<div class="c" style="left:590.0px;top:271.3px;width:31.6px;line-height:7.4px;justify-content:center;text-align:center;padding-left:.8px;">1</div>
<div class="c" style="left:464.2px;top:284.1px;width:67.7px;line-height:7.4px;padding-left:1.6px;">5.IPL5</div>
<div class="c" style="left:531.9px;top:284.1px;width:58.1px;line-height:7.4px;padding-left:2.4px;">其他减缓措施</div>
<div class="c" style="left:590.0px;top:284.1px;width:31.6px;line-height:7.4px;justify-content:center;text-align:center;padding-left:.8px;">1</div>
<div class="c" style="left:621.6px;top:250.8px;width:30.7px;line-height:7.4px;justify-content:center;text-align:center;padding-left:.8px;">5.00E-2</div>
<div class="c" style="left:652.3px;top:250.8px;width:28.1px;line-height:7.4px;justify-content:center;text-align:center;padding-left:.8px;">2.00E-4</div>
<div class="c" style="left:680.4px;top:250.8px;width:28.8px;line-height:7.4px;justify-content:center;text-align:center;padding-left:.8px;">SIL3</div>
<div class="c" style="left:119.4px;top:330.0px;width:41.1px;line-height:7.4px;padding-left:1.1px;">3.环境</div>
<div class="c" style="left:160.5px;top:330.0px;width:23.0px;line-height:7.4px;justify-content:center;text-align:center;padding-left:.8px;">4</div>
<div class="c" style="left:183.5px;top:330.0px;width:32.3px;line-height:7.4px;padding-left:3.7px;">1E-04</div>
<div class="c" style="left:215.8px;top:330.0px;width:43.5px;line-height:7.4px;padding-left:2.3px;">1.初始事件1</div>
<div class="c" style="left:259.3px;top:330.0px;width:29.3px;line-height:7.4px;padding-left:3.3px;">1.00E-1</div>
<div class="c" style="left:288.6px;top:295.4px;width:47.4px;line-height:10.1px;padding-left:1.8px;white-space:normal;"><span style="display:block;padding-left:5.4px;text-indent:-5.4px">1.每天只使用8小时</span></div>
<div class="c" style="left:288.6px;top:328.7px;width:47.4px;line-height:10.1px;padding-left:1.8px;white-space:normal;"><span style="display:block;padding-left:5.4px;text-indent:-5.4px">2.每年只使用4个月</span></div>
<div class="c" style="left:336.0px;top:296.4px;width:29.8px;line-height:7.4px;justify-content:center;text-align:center;padding-left:.8px;">1</div>
<div class="c" style="left:336.0px;top:330.0px;width:29.8px;line-height:7.4px;justify-content:center;text-align:center;padding-left:.8px;">1</div>
<div class="c" style="left:365.8px;top:296.6px;width:62.5px;line-height:7.4px;padding-left:1.6px;">1.人员暴露概率</div>
<div class="c" style="left:365.8px;top:317.9px;width:62.5px;line-height:7.4px;padding-left:1.6px;">2.点燃率</div>
<div class="c" style="left:365.8px;top:351.4px;width:62.5px;line-height:7.4px;padding-left:1.6px;">3.致死概率</div>
<div class="c" style="left:428.3px;top:296.4px;width:35.9px;line-height:7.4px;justify-content:center;text-align:center;padding-left:.8px;">1</div>
<div class="c" style="left:428.3px;top:317.9px;width:35.9px;line-height:7.4px;justify-content:center;text-align:center;padding-left:.8px;">1</div>
<div class="c" style="left:428.3px;top:351.4px;width:35.9px;line-height:7.4px;justify-content:center;text-align:center;padding-left:.8px;">1</div>
<div class="c" style="left:464.2px;top:296.6px;width:67.7px;line-height:7.4px;padding-left:1.6px;">1.IPL1</div>
<div class="c" style="left:531.9px;top:296.6px;width:58.1px;line-height:7.4px;padding-left:2.4px;">本质安全</div>
<div class="c" style="left:590.0px;top:296.6px;width:31.6px;line-height:7.4px;justify-content:center;text-align:center;padding-left:.8px;">1</div>
<div class="c" style="left:464.2px;top:317.8px;width:67.7px;line-height:7.4px;padding-left:1.6px;">2.IPL2来自HAZOP</div>
<div class="c" style="left:531.9px;top:317.8px;width:58.1px;line-height:7.4px;padding-left:2.4px;">BPCS</div>
<div class="c" style="left:590.0px;top:317.8px;width:31.6px;line-height:7.4px;justify-content:center;text-align:center;padding-left:.8px;">1</div>
<div class="c" style="left:464.2px;top:330.6px;width:67.7px;line-height:7.4px;padding-left:1.6px;">3.IPL3</div>
<div class="c" style="left:531.9px;top:330.6px;width:58.1px;line-height:7.4px;padding-left:2.4px;">报警+人员响应</div>
<div class="c" style="left:590.0px;top:330.6px;width:31.6px;line-height:7.4px;justify-content:center;text-align:center;padding-left:.8px;">1</div>
<div class="c" style="left:464.2px;top:350.5px;width:67.7px;line-height:7.4px;padding-left:1.6px;">4.IPL4</div>
<div class="c" style="left:531.9px;top:350.5px;width:58.1px;line-height:7.4px;padding-left:2.4px;">物理保护层</div>
<div class="c" style="left:590.0px;top:350.5px;width:31.6px;line-height:7.4px;justify-content:center;text-align:center;padding-left:.8px;">1</div>
<div class="c" style="left:464.2px;top:363.3px;width:67.7px;line-height:7.4px;padding-left:1.6px;">5.IPL5</div>
<div class="c" style="left:531.9px;top:363.3px;width:58.1px;line-height:7.4px;padding-left:2.4px;">其他减缓措施</div>
<div class="c" style="left:590.0px;top:363.3px;width:31.6px;line-height:7.4px;justify-content:center;text-align:center;padding-left:.8px;">1</div>
<div class="c" style="left:621.6px;top:330.0px;width:30.7px;line-height:7.4px;justify-content:center;text-align:center;padding-left:.8px;">1.00E-1</div>
<div class="c" style="left:652.3px;top:330.0px;width:28.1px;line-height:7.4px;justify-content:center;text-align:center;padding-left:.8px;">1.00E-3</div>
<div class="c" style="left:680.4px;top:330.0px;width:28.8px;line-height:7.4px;justify-content:center;text-align:center;padding-left:.8px;">SIL2</div>
<div class="c" style="left:709.2px;top:250.5px;width:30.2px;line-height:7.4px;padding-left:2.6px;">2.00E-4</div>
<div class="c" style="left:739.4px;top:250.5px;width:31.7px;line-height:7.4px;justify-content:center;text-align:center;padding-left:.8px;">SIL3</div>
<div class="a" style="left:815.2px;top:31.8px;width:10px;height:375px;background:#f0f0f0"></div>
<div class="a" style="left:816.8px;top:40.7px;width:7px;height:311px;background:#c1c1c1"></div>
<div class="a" style="left:0;top:404.8px;width:825px;height:2.6px;background:#e9e9e9"></div>
<div class="a" style="left:0;top:407.4px;width:825px;height:9px;background:#f0f0f0"></div>
<div class="a" style="left:9.6px;top:408.2px;width:795.8px;height:8px;background:#c1c1c1"></div>
<div class="a" style="left:815.2px;top:407px;width:10px;height:9px;background:#dedede"></div>
<svg style="left:818.4px;top:36px" width="4" height="3" viewBox="0 0 4 3"><path d="M0 2.6h4L2 0z" fill="#606060"/></svg>
<svg style="left:818.6px;top:400.4px" width="4" height="3" viewBox="0 0 4 3"><path d="M0 0h4L2 2.6z" fill="#505050"/></svg>
<svg style="left:809.6px;top:409.6px" width="3" height="4" viewBox="0 0 3 4"><path d="M0 0v4L2.6 2z" fill="#505050"/></svg>
<svg style="left:3.6px;top:409.6px" width="3" height="4" viewBox="0 0 3 4"><path d="M2.6 0v4L0 2z" fill="#505050"/></svg>
</div></body></html>
